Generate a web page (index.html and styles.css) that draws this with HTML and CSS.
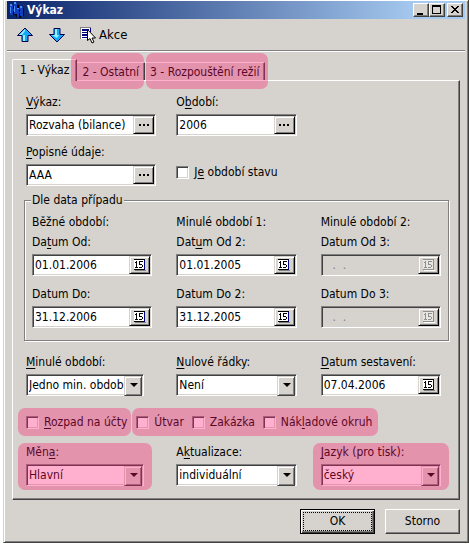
FILE: index.html
```html
<!doctype html>
<html lang="cs"><head>
	<title>Výkaz</title>
	<meta charset="utf-8">
	<link rel="stylesheet" href="styles.css">
</head><body>
	<svg class="symbols" width="0" height="0">
		<symbol id="calendar" viewBox="0 0 12 12">
			<path class="cal-shade" d="M1 11h11v1H1z"/>
			<path class="cal-page" d="M0 1h10v9H0z"/>
			<path class="cal-line" d="M0 0h11v1H0zM0 10h11v1H0z"/>
			<path class="cal-side" d="M10 1h1v10h-1z"/>
			<path class="cal-num" d="M2 2h1v6H2zM1 3h1v1H1zM1 8h3v1H1zM5 2h4v1H5zM5 3h1v2H5zM5 5h3v1H5zM8 6h1v2H8zM5 8h3v1H5z"/>
		</symbol>
	</svg>
	<main class="window">
		<header class="titlebar">
			<svg class="logo" width="16" height="16" viewBox="0 0 16 16">
				<path fill="#080810" d="M4 4h2v9H3zM8 3h2v4H8zM10 8h2v8h-2zM13 6h2v8h-2zM6 12h3v3H7z"/>
				<path fill="#1040c0" d="M1 3h3v10H1zM5 1h3v11H5zM3 7h3v2H3zM8 7h2v8H8zM11 5h3v9h-3zM9 10h3v1H9z"/>
				<path fill="#5090f0" d="M1 2h2v2H1zM5 0h2v2H5zM8 6h2v1H8zM11 4h2v2h-2zM5 4h1v6H5zM1 5h1v6H1z"/>
			</svg>
			<h1>Výkaz</h1>
			<button type="button" class="sysbtn" aria-label="Minimalizovat"><svg width="12" height="10"><path d="M2 8h6v2H2z"/></svg></button>
			<button type="button" class="sysbtn" aria-label="Maximalizovat"><svg width="12" height="10"><path fill-rule="evenodd" d="M1 0h9v9H1zM2 2v6h7V2z"/></svg></button>
			<button type="button" class="sysbtn close" aria-label="Zavřít"><svg width="12" height="10"><path d="M2 1h2v1h1v1h2V2h1V1h2v1H9v1H8v1H7v1h1v1h1v1h1v1H8V7H7V6H5v1H4v1H2V7h1V6h1V5h1V4H4V3H3V2H2z"/></svg></button>
		</header>

		<div class="toolbar">
			<button type="button" class="tool" aria-label="Předchozí">
				<svg width="18" height="16" viewBox="0 0 18 16">
					<path fill="#18a8f8" stroke="#000050" d="M1.5 8.500L9 1l7.500 7.500H12V14.500H6V8.500z"/>
					<path fill="#90f0ff" d="M3 8l6-6v2L6 8zM7 8h2v6H7z"/>
				</svg>
			</button>
			<button type="button" class="tool" aria-label="Další">
				<svg width="18" height="16" viewBox="0 0 18 16">
					<path fill="#18a8f8" stroke="#000050" d="M1.500 7.500H6V1.500H12V7.500H16.500L9 15z"/>
					<path fill="#90f0ff" d="M7 2h2v6h2L9 11 4 8h3z"/>
				</svg>
			</button>
			<button type="button" class="tool action">
				<svg width="17" height="18" viewBox="0 0 17 18">
					<path fill="#808080" d="M0 1h11v12H0z"/>
					<path fill="#fff" d="M1 2h10v11H1z"/>
					<path fill="#000080" d="M2 3h7v2H2zM2 6h7v1H2zM2 8h6v2H2zM2 11h6v1H2zM10 2h1v4h-1z"/>
					<path fill="#fff" stroke="#000" d="M7.500 3.500v11l2.500-2 2 4.500 2-1-2-4h3.500z"/>
				</svg>
				Akce
			</button>
		</div>

		<nav class="tabs" role="tablist">
			<button type="button" role="tab" class="tab active" aria-selected="true">1 - Výkaz</button>
			<button type="button" role="tab" class="tab marked">2 - Ostatní</button>
			<button type="button" role="tab" class="tab marked">3 - Rozpouštění režií</button>
		</nav>

		<form class="panel">
			<div class="row">
				<div class="cell wide">
					<label for="vykaz"><u>V</u>ýkaz:</label>
					<div class="field"><input id="vykaz" type="text" value="Rozvaha (bilance)"><button type="button" class="pick" aria-label="Vybrat výkaz"><i></i><i></i><i></i></button></div>
				</div>
				<div class="cell">
					<label for="obdobi">O<u>b</u>dobí:</label>
					<div class="field"><input id="obdobi" type="text" value="2006"><button type="button" class="pick" aria-label="Vybrat období"><i></i><i></i><i></i></button></div>
				</div>
			</div>
			<div class="row">
				<div class="cell wide">
					<label for="popis"><u>P</u>opisné údaje:</label>
					<div class="field"><input id="popis" type="text" value="AAA"><button type="button" class="pick" aria-label="Vybrat údaje"><i></i><i></i><i></i></button></div>
				</div>
				<label class="check state"><input type="checkbox"><span>J<u>e</u> období stavu</span></label>
			</div>

			<fieldset class="group">
				<legend>Dle data případu</legend>
				<div class="dates">
					<span>Běžné období:</span>
					<span>Minulé období 1:</span>
					<span>Minulé období 2:</span>
				</div>
				<div class="dates">
					<div class="cell">
						<label for="od1">Da<u>t</u>um Od:</label>
						<div class="field"><input id="od1" type="text" value="01.01.2006"><button type="button" class="pick" aria-label="Kalendář"><svg width="12" height="12"><use href="#calendar"/></svg></button></div>
					</div>
					<div class="cell">
						<label for="od2">Dat<u>u</u>m Od 2:</label>
						<div class="field"><input id="od2" type="text" value="01.01.2005"><button type="button" class="pick" aria-label="Kalendář"><svg width="12" height="12"><use href="#calendar"/></svg></button></div>
					</div>
					<div class="cell">
						<label for="od3">Datum Od 3:</label>
						<div class="field off"><input id="od3" type="text" value="  .  ." disabled><button type="button" class="pick" aria-label="Kalendář" disabled><svg width="12" height="12"><use href="#calendar"/></svg></button></div>
					</div>
				</div>
				<div class="dates">
					<div class="cell">
						<label for="do1">Datum Do:</label>
						<div class="field"><input id="do1" type="text" value="31.12.2006"><button type="button" class="pick" aria-label="Kalendář"><svg width="12" height="12"><use href="#calendar"/></svg></button></div>
					</div>
					<div class="cell">
						<label for="do2">Datum Do 2:</label>
						<div class="field"><input id="do2" type="text" value="31.12.2005"><button type="button" class="pick" aria-label="Kalendář"><svg width="12" height="12"><use href="#calendar"/></svg></button></div>
					</div>
					<div class="cell">
						<label for="do3">Datum Do 3:</label>
						<div class="field off"><input id="do3" type="text" value="  .  ." disabled><button type="button" class="pick" aria-label="Kalendář" disabled><svg width="12" height="12"><use href="#calendar"/></svg></button></div>
					</div>
				</div>
			</fieldset>

			<div class="row">
				<div class="cell short">
					<label for="minule"><u>M</u>inulé období:</label>
					<div class="field combo"><select id="minule"><option>Jedno min. období</option></select></div>
				</div>
				<div class="cell">
					<label for="radky"><u>N</u>ulové řádky:</label>
					<div class="field combo"><select id="radky"><option>Není</option></select></div>
				</div>
				<div class="cell">
					<label for="sestaveni"><u>D</u>atum sestavení:</label>
					<div class="field"><input id="sestaveni" type="text" value="07.04.2006"><button type="button" class="pick" aria-label="Kalendář"><svg width="12" height="12"><use href="#calendar"/></svg></button></div>
				</div>
			</div>

			<div class="checks">
				<div class="marked first">
					<label class="check"><input type="checkbox"><span><u>R</u>ozpad na účty</span></label>
				</div>
				<div class="marked rest">
					<label class="check"><input type="checkbox"><span>Útvar</span></label>
					<label class="check"><input type="checkbox"><span>Zakázka</span></label>
					<label class="check"><input type="checkbox"><span>Nák<u>l</u>adové okruh</span></label>
				</div>
			</div>

			<div class="row last">
				<div class="cell short marked">
					<label for="mena">Měn<u>a</u>:</label>
					<div class="field combo"><select id="mena"><option>Hlavní</option></select></div>
				</div>
				<div class="cell">
					<label for="aktualizace">A<u>k</u>tualizace:</label>
					<div class="field combo"><select id="aktualizace"><option>individuální</option></select></div>
				</div>
				<div class="cell marked">
					<label for="jazyk"><u>J</u>azyk (pro tisk):</label>
					<div class="field combo"><select id="jazyk"><option>český</option></select></div>
				</div>
			</div>
		</form>

		<footer class="buttons">
			<button type="button" class="btn default"><span>OK</span></button>
			<button type="button" class="btn"><span>Storno</span></button>
		</footer>
	</main>
</body></html>
```

FILE: styles.css
```css
* {
	box-sizing: border-box;
}

body {
	margin: 0;
	padding: 0 0 1px 3px;
	background: white;
	color: black;
	font: 12px/16px 'DejaVu Sans Condensed', 'DejaVu Sans', sans-serif;
}

button, input, select {
	margin: 0;
	padding: 0;
	border: 0;
	border-radius: 0;
	background: none;
	color: inherit;
	font: inherit;
}

svg {
	display: block;
}

.symbols {
	position: absolute;
}

u {
	text-underline-offset: 2px;
}

.window {
	background: #d6d3ce;
	border-right: 1px solid #404040;
	border-bottom: 1px solid #404040;
	border-left: 1px solid #d6d3ce;
	box-shadow: inset 1px 1px white, inset -1px -1px #808080;
	padding: 1px 3px 8px;
}

/* title bar */

.titlebar {
	display: flex;
	align-items: center;
	height: 18px;
	padding: 0 2px;
	background: linear-gradient(to right, #0a246a, #a6caf0 90%);
	color: white;
}

.titlebar h1 {
	flex: 1;
	margin: 0 0 0 2px;
	font-size: 12px;
	line-height: 18px;
}

.sysbtn {
	width: 16px;
	height: 14px;
	padding: 1px;
	background: #d6d3ce;
	border: 1px solid;
	border-color: white #404040 #404040 white;
	box-shadow: inset -1px -1px #808080;
	fill: black;
}

.close {
	margin-left: 2px;
}

/* toolbar */

.toolbar {
	display: flex;
	align-items: center;
	gap: 14px;
	height: 32px;
	padding: 0 9px;
	border-bottom: 1px solid #808080;
	box-shadow: 0 1px white;
}

.action {
	display: flex;
	align-items: center;
	gap: 2px;
	font-size: 13px;
}

/* tabs */

.tabs {
	display: flex;
	align-items: flex-end;
	margin: 8px 5px 0;
}

.tab {
	position: relative;
	height: 18px;
	padding: 1px 5px 0;
	border-top: 1px solid white;
	border-right: 1px solid #404040;
	box-shadow: inset -1px 0 #808080;
	line-height: 16px;
	white-space: nowrap;
}

.active {
	height: 22px;
	margin-bottom: -1px;
	padding: 0 7px 2px;
	background: #d6d3ce;
	border-left: 1px solid white;
	border-top-left-radius: 2px;
	z-index: 1;
}

/* pink highlight laid over a control */

.marked {
	position: relative;
}

.marked::after {
	content: '';
	position: absolute;
	inset: -1px -8px -4px;
	border-radius: 7px;
	background: rgba(255, 22, 112, .34);
	pointer-events: none;
	z-index: 2;
}

.tab.marked::after {
	inset: -10px 0 -9px -6px;
}

.tab.marked:last-child::after {
	inset: -10px -4px -9px 1px;
}

.checks .marked::after {
	inset: 0;
}

/* form */

.panel {
	margin: 0 5px;
	padding: 13px 18px 13px 13px;
	border: 1px solid;
	border-color: white #404040 #404040 white;
	box-shadow: inset -1px -1px #808080;
}

.row {
	display: grid;
	grid-template-columns: 126fr 120fr 120fr;
	column-gap: 24px;
	margin-bottom: 8px;
}

.last {
	margin-bottom: 0;
}

.cell label {
	display: block;
	margin-bottom: 4px;
	white-space: nowrap;
}

.wide {
	margin-right: -4px;
}

.short {
	margin-right: 8px;
}

.field {
	position: relative;
	display: flex;
	height: 22px;
	padding: 1px;
	background: white;
	border: 1px solid;
	border-color: #808080 white white #808080;
	box-shadow: inset 1px 1px #404040, inset -1px -1px #d6d3ce;
}

.field input, .field select {
	flex: 1;
	min-width: 0;
	width: 0;
	padding-left: 1px;
	outline: 0;
}

.off {
	--cal-ink: #909090;
	--cal-side: #909090;
	--cal-page: #e8e6e2;
	--cal-shade: white;
	background: #d6d3ce;
	color: #808080;
}

.off input {
	padding-left: 3px;
}

.pick {
	display: flex;
	flex: none;
	align-items: center;
	justify-content: center;
	gap: 2px;
	width: 21px;
	background: #d6d3ce;
	border: 1px solid;
	border-color: #d6d3ce black black #d6d3ce;
	box-shadow: inset 1px 1px white, inset -1px -1px #808080;
}

.pick i {
	width: 2px;
	height: 2px;
	background: black;
}

.cal-side {
	fill: var(--cal-side, #000080);
}

.cal-shade {
	fill: var(--cal-shade, #808080);
}

.cal-line, .cal-num {
	fill: var(--cal-ink, black);
}

.cal-page {
	fill: var(--cal-page, white);
}

.combo select {
	appearance: none;
	padding: 0 18px 0 1px;
}

.combo::before {
	content: '';
	position: absolute;
	top: 1px;
	right: 1px;
	width: 16px;
	height: 18px;
	background: #d6d3ce;
	border: 1px solid;
	border-color: #d6d3ce #404040 #404040 #d6d3ce;
	box-shadow: inset 1px 1px white, inset -1px -1px #808080;
	pointer-events: none;
}

.combo::after {
	content: '';
	position: absolute;
	top: 8px;
	right: 5px;
	border: 4px solid transparent;
	border-top-color: black;
	border-bottom: 0;
	pointer-events: none;
}

.check {
	display: flex;
	align-items: center;
	gap: 5px;
	white-space: nowrap;
}

.check input {
	appearance: none;
	flex: none;
	width: 13px;
	height: 13px;
	background: white;
	border: 1px solid;
	border-color: #808080 white white #808080;
	box-shadow: inset 1px 1px #404040, inset -1px -1px #d6d3ce;
}

.state {
	align-self: end;
	height: 28px;
}

.group {
	min-width: 0;
	margin: -2px -8px 13px -2px;
	padding: 6px 7px 12px;
	border: 1px solid #808080;
	box-shadow: inset 1px 1px white, 1px 1px white;
}

.group legend {
	margin-left: -1px;
	padding: 0 1px;
	background: #d6d3ce;
}

.dates {
	display: grid;
	grid-template-columns: repeat(3, 1fr);
	column-gap: 24px;
	margin-bottom: 4px;
	white-space: nowrap;
}

.dates + .dates + .dates {
	margin: 10px 0 0;
}

.checks {
	display: flex;
	gap: 1px;
	margin: 12px 0 8px -8px;
}

.checks .marked {
	display: flex;
	padding: 6px 4px 6px 8px;
}

.checks .rest {
	gap: 8px;
	padding: 6px 6px 6px 4px;
}

/* dialog buttons */

.buttons {
	display: flex;
	justify-content: flex-end;
	gap: 10px;
	padding: 9px 5px 0;
}

.btn {
	width: 75px;
	height: 25px;
	padding: 2px;
	border: 1px solid;
	border-color: white #404040 #404040 white;
	box-shadow: inset -1px -1px #808080;
}

.btn span {
	display: block;
	line-height: 19px;
}

.default {
	border-color: black;
	box-shadow: inset 1px 1px white, inset -1px -1px #404040, inset -2px -2px #808080;
}

.default span {
	border: 1px dotted black;
	line-height: 17px;
}
```
